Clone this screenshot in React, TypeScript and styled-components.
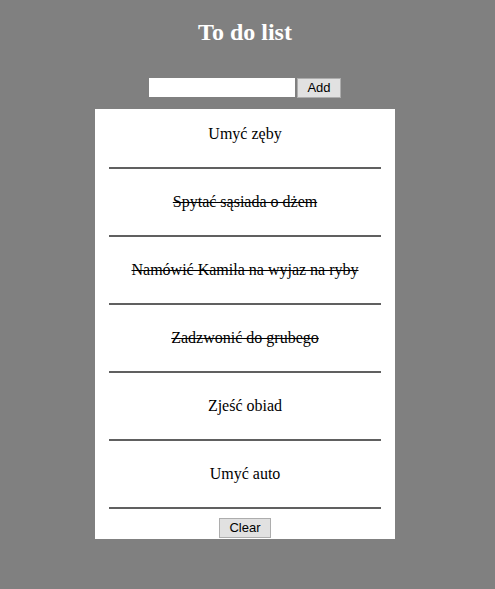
import React, { useState } from 'react';
import styled, { createGlobalStyle } from 'styled-components';

const GlobalStyle = createGlobalStyle`
html, body {
  margin: 0;
  padding: 0;
  background: #808080;
}
`;

type Task = { text: string; done: boolean };

const initialTasks: Task[] = [
  { text: 'Umyć zęby', done: false },
  { text: 'Spytać sąsiada o dżem', done: true },
  { text: 'Namówić Kamila na wyjaz na ryby', done: true },
  { text: 'Zadzwonić do grubego', done: true },
  { text: 'Zjeść obiad', done: false },
  { text: 'Umyć auto', done: false },
];

const App = () => {
  const [tasks, setTasks] = useState<Task[]>(initialTasks);
  const [value, setValue] = useState('');

  const add = () => {
    if (!value.trim()) return;
    setTasks([...tasks, { text: value, done: false }]);
    setValue('');
  };

  const toggle = (i: number) => {
    setTasks(tasks.map((t, j) => (j === i ? { ...t, done: !t.done } : t)));
  };

  return (
    <>
      <GlobalStyle />
      <Page>
        <Title>To do list</Title>
        <Form>
          <Input value={value} onChange={(e) => setValue(e.target.value)} />
          <Button onClick={add}>Add</Button>
        </Form>
        <Panel>
          <List>
            {tasks.map((t, i) => (
              <Item key={i} $done={t.done} onClick={() => toggle(i)}>
                {t.text}
              </Item>
            ))}
          </List>
          <Footer>
            <Button onClick={() => setTasks(tasks.filter((t) => !t.done))}>Clear</Button>
          </Footer>
        </Panel>
      </Page>
    </>
  );
};

export default App;

const Page = styled.div`
width: 490px;
display: flex;
flex-direction: column;
align-items: center;
padding-top: 19px;
padding-bottom: 50px;
`;

const Title = styled.h1`
margin: 0;
font-family: "Liberation Serif", "Times New Roman", serif;
font-size: 24px;
font-weight: 700;
color: #ffffff;
line-height: 27px;
`;

const Form = styled.div`
display: flex;
align-items: flex-start;
gap: 2px;
margin-top: 32px;
`;

const Input = styled.input`
width: 146px;
height: 19px;
box-sizing: border-box;
border: none;
outline: none;
background: #ffffff;
padding: 0 3px;
font-family: "Liberation Sans", Arial, sans-serif;
font-size: 12px;
`;

const Button = styled.button`
height: 20px;
box-sizing: border-box;
padding: 0 9px;
background: #e1e1e1;
border: 1px solid #adadad;
border-radius: 0;
font-family: "Liberation Sans", Arial, sans-serif;
font-size: 13px;
color: #000000;
line-height: 18px;
cursor: pointer;
`;

const Panel = styled.div`
width: 300px;
margin-top: 11px;
background: #ffffff;
display: flex;
flex-direction: column;
`;

const List = styled.ul`
list-style: none;
margin: 0;
padding: 0;
`;

const Item = styled.li<{ $done: boolean }>`
margin: 0 14px;
padding: 24px 0;
border-bottom: 2px solid #606060;
text-align: center;
font-family: "Liberation Serif", "Times New Roman", serif;
font-size: 16px;
line-height: 18px;
color: #000000;
text-decoration: ${(p) => (p.$done ? 'line-through' : 'none')};
cursor: pointer;

&:first-child {
  padding-top: 16px;
}
`;

const Footer = styled.div`
display: flex;
justify-content: center;
padding: 9px 0 1px;
`;
